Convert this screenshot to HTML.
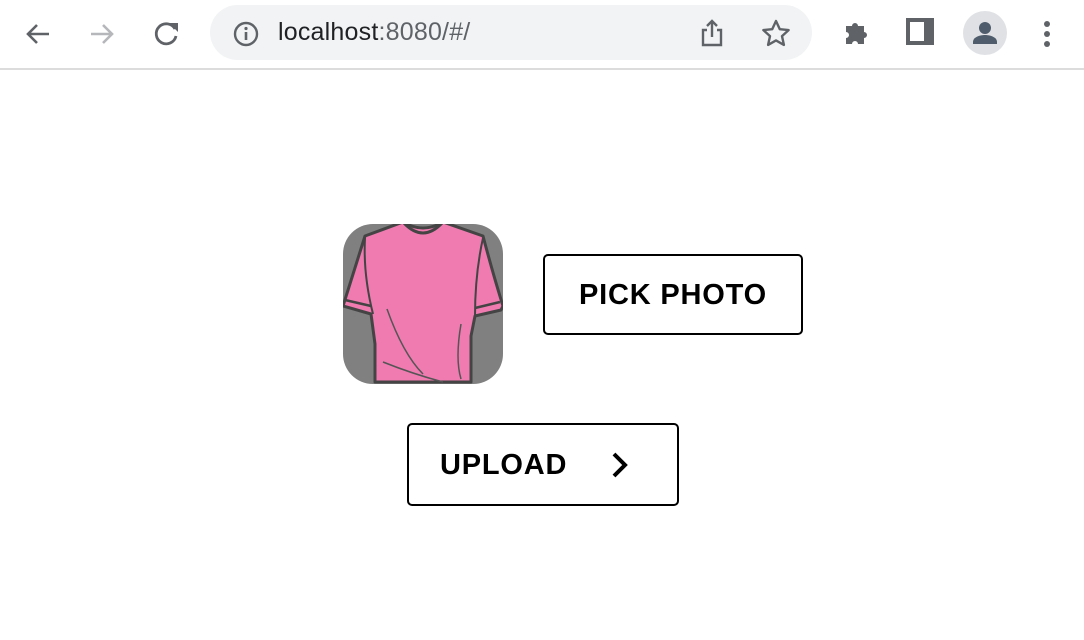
<!DOCTYPE html>
<html><head><meta charset="utf-8"><style>
*{margin:0;padding:0;box-sizing:border-box}
body{width:1084px;height:640px;background:#fff;position:relative;overflow:hidden;font-family:"Liberation Sans",sans-serif}
.bar{position:absolute;left:0;top:0;width:1084px;height:70px;background:#fff;border-bottom:2px solid #dcdcdc}
.url{position:absolute;left:210px;top:5px;width:602px;height:55px;background:#f1f3f4;border-radius:28px}
.urltxt{position:absolute;left:278px;top:18px;font-size:25px;color:#202124;letter-spacing:0.2px}
.urltxt span{color:#5f6368}
.btn{position:absolute;border:2px solid #000;border-radius:5px;background:#fff;font-weight:bold;font-size:29px;color:#000;letter-spacing:0.8px}
svg{position:absolute}
</style></head><body>
<div class="bar">
<div class="url"></div>
<svg style="left:22px;top:18px" width="32" height="32" viewBox="0 0 32 32"><path d="M27 16H7M15 7l-9 9 9 9" stroke="#5f6368" stroke-width="2.6" fill="none"/></svg>
<svg style="left:86px;top:18px" width="32" height="32" viewBox="0 0 32 32"><path d="M5 16h20M17 7l9 9-9 9" stroke="#b5b7ba" stroke-width="2.6" fill="none"/></svg>
<svg style="left:150px;top:17px" width="32" height="32" viewBox="0 0 32 32"><path d="M25 12A10 10 0 1 0 26 19" stroke="#5f6368" stroke-width="2.8" fill="none"/><path d="M19 6h9v9z" fill="#5f6368"/></svg>
<svg style="left:232px;top:20px" width="28" height="28" viewBox="0 0 28 28"><circle cx="14" cy="14" r="11" stroke="#5f6368" stroke-width="2.4" fill="none"/><path d="M14 12v8" stroke="#5f6368" stroke-width="2.6"/><circle cx="14" cy="8.5" r="1.6" fill="#5f6368"/></svg>
<div class="urltxt">localhost<span>:8080/#/</span></div>
<svg style="left:698px;top:18px" width="28" height="30" viewBox="0 0 28 30"><path d="M9 12H5v15h18V12h-4M14 19V3M9 8l5-5 5 5" stroke="#5f6368" stroke-width="2.4" fill="none"/></svg>
<svg style="left:760px;top:18px" width="32" height="30" viewBox="0 0 32 30"><path d="M16 3l3.8 8.2 8.8.9-6.6 6 1.9 8.8L16 22.4 8.1 26.9 10 18.1l-6.6-6 8.8-.9z" stroke="#5f6368" stroke-width="2.4" fill="none" stroke-linejoin="round"/></svg>
<svg style="left:842px;top:19px" width="30" height="30" viewBox="0 0 30 30"><path d="M4 9h6a3 3 0 1 1 6 0h6v6a3 3 0 1 1 0 6v6h-6a3 3 0 1 0-6 0H4v-6a3 3 0 1 0 0-6z" fill="#5f6368" transform="translate(0,-2)"/></svg>
<svg style="left:906px;top:18px" width="30" height="30" viewBox="0 0 30 30"><rect x="0" y="0" width="28" height="27" fill="#5f6368"/><rect x="4" y="4" width="14" height="19" fill="#fff"/></svg>
<svg style="left:962px;top:10px" width="46" height="46" viewBox="0 0 46 46"><circle cx="23" cy="23" r="22" fill="#dfe1e5"/><circle cx="23" cy="18" r="6" fill="#4f5c6b"/><path d="M11 32c0-5 7-7 12-7s12 2 12 7v2H11z" fill="#4f5c6b"/></svg>
<svg style="left:1041px;top:20px" width="12" height="28" viewBox="0 0 12 28"><circle cx="6" cy="4" r="3" fill="#5f6368"/><circle cx="6" cy="14" r="3" fill="#5f6368"/><circle cx="6" cy="24" r="3" fill="#5f6368"/></svg>
</div>
<svg style="left:343px;top:224px" width="160" height="160" viewBox="0 0 160 160">
<defs><clipPath id="c"><rect width="160" height="160" rx="30"/></clipPath></defs>
<g clip-path="url(#c)">
<rect width="160" height="160" fill="#808080"/>
<path d="M22 12 L60 -2 Q80 10 100 -2 L140 12 Q150 50 160 82 L158 86 L132 92 L128 112 L128 158 L32 158 L32 120 L28 90 L0 82 Q10 50 22 12 Z" fill="#ef7bb0" stroke="#444" stroke-width="3" stroke-linejoin="round"/>
<path d="M60 -2 Q80 20 100 -2" fill="none" stroke="#444" stroke-width="3"/>
<path d="M2 76 L28 82 M132 84 L157 78" stroke="#444" stroke-width="2.5"/>
<path d="M22 14 Q20 50 30 90 M140 14 Q132 50 132 92" fill="none" stroke="#444" stroke-width="2"/>
<path d="M44 85 Q60 130 80 150 M40 138 Q70 150 100 158 M118 100 Q112 135 118 155" fill="none" stroke="#555" stroke-width="1.5"/>
</g></svg>
<div class="btn" style="left:543px;top:254px;width:260px;height:81px;line-height:79px;text-align:center">PICK PHOTO</div>
<div class="btn" style="left:407px;top:423px;width:272px;height:83px;line-height:80px;padding-left:31px">UPLOAD</div>
<svg style="left:610px;top:450px" width="22" height="30" viewBox="0 0 22 30"><path d="M4 4l11 11L4 26" stroke="#000" stroke-width="4" fill="none"/></svg>
</body></html>
